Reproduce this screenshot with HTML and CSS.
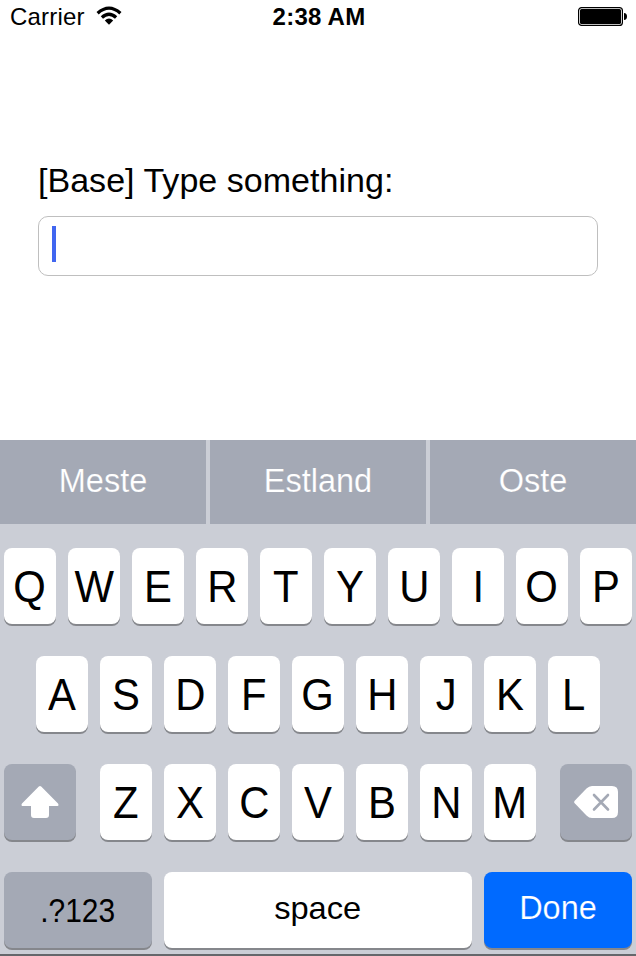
FILE: index.html
```html
<!DOCTYPE html>
<html lang="en">
<head>
<meta charset="utf-8">
<title>Keyboard</title>
<link rel="stylesheet" href="styles.css">
</head>
<body>
<div class="screen">
  <header class="status">
    <div class="carrier">
      <span class="carrier-name">Carrier</span>
      <svg class="wifi" width="26" height="20" viewBox="0 0 26 20">
        <path d="M1.6 7.2Q13 -2.9 24.4 7.2" fill="none" stroke="#000" stroke-width="3.3"/>
        <path d="M5.900 11.500Q13 5 20.100 11.500" fill="none" stroke="#000" stroke-width="3.300"/>
        <path d="M8.800 14.500Q13 10.500 17.200 14.500L13 18.800Z"/>
      </svg>
    </div>
    <span class="time">2:38 AM</span>
    <svg class="battery" width="50" height="20" viewBox="0 0 50 20">
      <rect x="0.6" y="0.6" width="43.8" height="17.8" rx="3" fill="#fff" stroke="#000" stroke-width="1.2"/>
      <rect x="2" y="2" width="41" height="15" rx="1.5"/>
      <path d="M46 6Q49 6.4 49 9.5T46 13Z"/>
    </svg>
  </header>
  <main class="form">
    <label class="prompt" for="entry">[Base] Type something:</label>
    <div class="field" id="entry"><span class="caret"></span></div>
  </main>
  <section class="keyboard">
    <div class="suggestions">
      <div class="suggestion"><span>Meste</span></div>
      <div class="suggestion"><span>Estland</span></div>
      <div class="suggestion"><span>Oste</span></div>
    </div>
    <div class="keys">
      <div class="row">
        <div class="key"><span>Q</span></div><div class="key"><span>W</span></div><div class="key"><span>E</span></div><div class="key"><span>R</span></div><div class="key"><span>T</span></div><div class="key"><span>Y</span></div><div class="key"><span>U</span></div><div class="key"><span>I</span></div><div class="key"><span>O</span></div><div class="key"><span>P</span></div>
      </div>
      <div class="row">
        <div class="key"><span>A</span></div><div class="key"><span>S</span></div><div class="key"><span>D</span></div><div class="key"><span>F</span></div><div class="key"><span>G</span></div><div class="key"><span>H</span></div><div class="key"><span>J</span></div><div class="key"><span>K</span></div><div class="key"><span>L</span></div>
      </div>
      <div class="row spread">
        <div class="key side">
          <svg width="38" height="32" viewBox="0 0 38 32"><path d="M17.8 .6Q19 -.4 20.2 .6L37 17.6Q38.200 19.500 36.500 20H28V29Q28 32 25 32H13Q10 32 10 29V20H1.500Q-.2 19.500 1 17.600Z" fill="#fff"/></svg>
        </div>
        <div class="letters">
          <div class="key"><span>Z</span></div><div class="key"><span>X</span></div><div class="key"><span>C</span></div><div class="key"><span>V</span></div><div class="key"><span>B</span></div><div class="key"><span>N</span></div><div class="key"><span>M</span></div>
        </div>
        <div class="key side">
          <svg width="44" height="32" viewBox="0 0 44 32"><path d="M18 0H38Q44 0 44 6V26Q44 32 38 32H18Q15 32 12.500 29.500L.7 17.300Q-.4 16 .7 14.700L12.500 2.500Q15 0 18 0Z" fill="#fff"/><path d="M20 9L34 23.500M34 9L20 23.500" stroke="#a4a9b5" stroke-width="2.600" stroke-linecap="round"/></svg>
        </div>
      </div>
      <div class="row">
        <div class="key wide mode"><span>.?123</span></div>
        <div class="key space"><span>space</span></div>
        <div class="key wide done"><span>Done</span></div>
      </div>
    </div>
  </section>
</div>
</body>
</html>
```
FILE: styles.css
```css
* { box-sizing: border-box; }
body {
  margin: 0;
  background: #fff;
  color: #000;
  font-family: "Liberation Sans", Arial, sans-serif;
}
.screen {
  width: 636px;
  height: 956px;
  display: flex;
  flex-direction: column;
  overflow: hidden;
}
.status {
  height: 34px;
  display: grid;
  grid-template-columns: 1fr auto 1fr;
  align-items: center;
  padding: 0 8px 0 10px;
  font-size: 24px;
  line-height: 34px;
}
.carrier { display: flex; align-items: center; gap: 11px; }
.carrier-name { letter-spacing: 0.2px; }
.wifi { margin-top: -2px; }
.time { font-weight: bold; font-size: 24px; letter-spacing: 0.25px; }
.battery { justify-self: end; }
.form { height: 406px; padding: 126px 38px 0; }
.prompt {
  display: block;
  height: 56px;
  line-height: 40px;
  font-size: 34px;
  letter-spacing: 0.03px;
  white-space: nowrap;
}
.field {
  height: 60px;
  border: 1px solid #bfbfbf;
  border-radius: 10px;
  padding: 9px 13px;
}
.caret { display: block; width: 4px; height: 36px; background: #4166f0; }
.keyboard {
  height: 516px;
  background: #cbced6;
  border-bottom: 2px solid #65676b;
}
.suggestions { display: grid; grid-template-columns: 206px 216px 206px; gap: 4px; height: 84px; }
.suggestion {
  display: flex;
  align-items: center;
  justify-content: center;
  background: #a4a9b5;
  color: #fff;
  font-size: 32.5px;
  -webkit-text-stroke: 0.2px #a4a9b5;
}
.suggestion span { margin-top: -2px; }
.keys { display: flex; flex-direction: column; gap: 32px; padding: 24px 4px 0; }
.row { display: flex; justify-content: center; gap: 12px; }
.spread { justify-content: space-between; }
.letters { display: flex; gap: 12px; }
.key {
  width: 52px;
  height: 76px;
  display: flex;
  align-items: center;
  justify-content: center;
  padding-top: 2px;
  border-radius: 8px;
  background: #fff;
  box-shadow: 0 2px 0 #85878c;
  font-size: 45px;
}
.key span { transform: scaleX(0.93); }
.side { width: 72px; background: #a4a9b5; padding-top: 0; }
.wide { width: 148px; }
.mode { background: #a4a9b5; font-size: 32.5px; }
.mode span { transform: scaleX(0.92); }
.space { width: 308px; font-size: 32px; padding: 0 0 3px; }
.space span { transform: scaleX(1.02); }
.done { background: #006aff; color: #fff; font-size: 32.5px; padding: 0 0 3px; -webkit-text-stroke: 0.2px #006aff; }
.done span { transform: none; }
```
